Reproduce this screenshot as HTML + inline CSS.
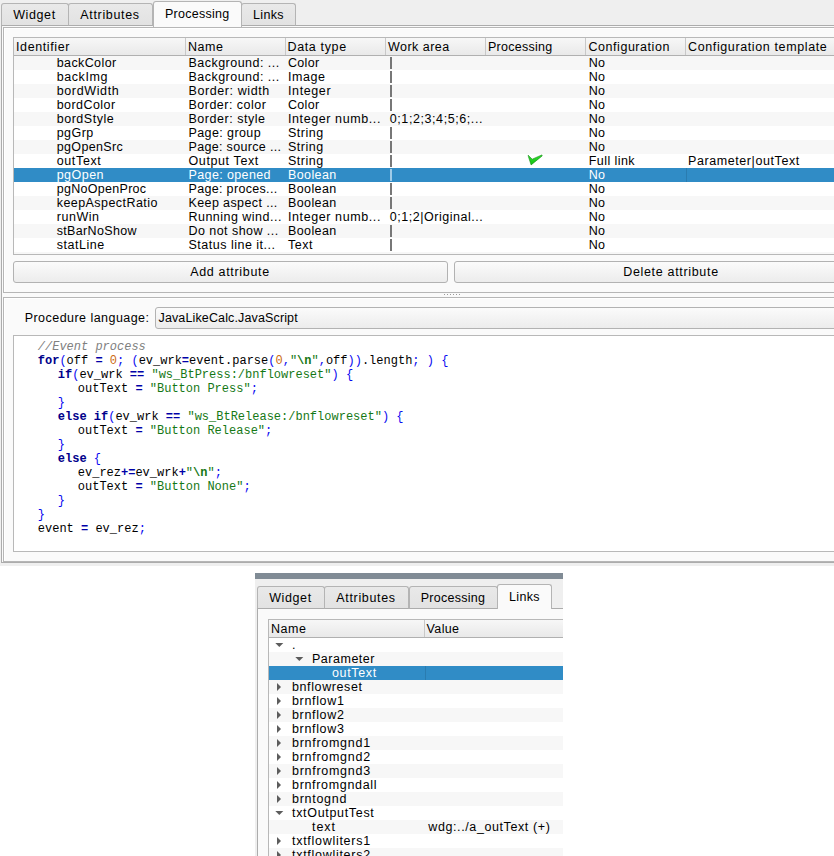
<!DOCTYPE html><html><head><meta charset="utf-8"><style>
*{margin:0;padding:0;box-sizing:border-box}
html,body{width:834px;height:856px;overflow:hidden;background:#ffffff}
body{position:relative;font-family:"Liberation Sans",sans-serif;font-size:12.5px}
.a{position:absolute}
.t{position:absolute;white-space:pre;font-size:12.5px;line-height:14px;font-family:"Liberation Sans",sans-serif}
.code{position:absolute;white-space:pre;font-family:"Liberation Mono",monospace;font-size:12px;line-height:14px;color:#000}
.kw{color:#00008b;font-weight:bold}
.op{color:#0000a8;font-weight:bold}
.p{color:#0a0af0}
.n{color:#cc6a10}
.s{color:#157815}
.sb{color:#157815;font-weight:bold}
.cm{color:#808080;font-style:italic}
</style></head><body>
<div style="position:relative;width:834px;height:856px;overflow:hidden">

<div class="a" style="left:0;top:0;width:834px;height:566px;background:#efefef"></div>
<div class="a" style="left:1px;top:25px;width:850px;height:538px;background:#fafafa;border:1px solid #acacac"></div>
<div class="a" style="left:1px;top:3px;width:68px;height:23px;background:linear-gradient(#e9e9e9,#e2e2e2);border:1px solid #b4b4b4;border-bottom:1px solid #acacac;border-radius:3px 3px 0 0"></div>
<div class="a" style="left:68px;top:3px;width:85px;height:23px;background:linear-gradient(#e9e9e9,#e2e2e2);border:1px solid #b4b4b4;border-bottom:1px solid #acacac;border-radius:3px 3px 0 0"></div>
<div class="a" style="left:241px;top:3px;width:55px;height:23px;background:linear-gradient(#e9e9e9,#e2e2e2);border:1px solid #b4b4b4;border-bottom:1px solid #acacac;border-radius:3px 3px 0 0"></div>
<div class="a" style="left:153px;top:1px;width:89px;height:26px;background:#fafafa;border:1px solid #b4b4b4;border-bottom:none;border-radius:3px 3px 0 0"></div>
<div class="t" style="left:13.2px;top:8px;letter-spacing:0.603px;color:#000;">Widget</div>
<div class="t" style="left:80.3px;top:8px;letter-spacing:0.665px;color:#000;">Attributes</div>
<div class="t" style="left:165.0px;top:7px;letter-spacing:0.272px;color:#000;">Processing</div>
<div class="t" style="left:253.1px;top:8px;letter-spacing:0.329px;color:#000;">Links</div>
<div class="a" style="left:3px;top:27px;width:850px;height:266px;border:1px solid #b6b6b6;background:#fafafa;box-shadow:inset 1px 1px 0 #fff"></div>
<div class="a" style="left:3px;top:297px;width:850px;height:265px;border:1px solid #b6b6b6;background:#fafafa;box-shadow:inset 1px 1px 0 #fff"></div>
<div class="a" style="left:13px;top:37px;width:850px;height:218px;border:1px solid #b8b8b8;background:#fff;overflow:hidden">
<div class="a" style="left:0px;top:0px;width:850px;height:17px;background:linear-gradient(#f7f7f7,#e9e9e9)"></div>
<div class="a" style="left:0px;top:17px;width:850px;height:1px;background:#b0b0b0"></div>
<div class="a" style="left:171px;top:0px;width:1px;height:17px;background:#c8c8c8"></div>
<div class="a" style="left:271px;top:0px;width:1px;height:17px;background:#c8c8c8"></div>
<div class="a" style="left:371px;top:0px;width:1px;height:17px;background:#c8c8c8"></div>
<div class="a" style="left:471px;top:0px;width:1px;height:17px;background:#c8c8c8"></div>
<div class="a" style="left:571px;top:0px;width:1px;height:17px;background:#c8c8c8"></div>
<div class="a" style="left:671px;top:0px;width:1px;height:17px;background:#c8c8c8"></div>
<div class="t" style="left:2.0px;top:2px;letter-spacing:0.612px;color:#000;">Identifier</div>
<div class="t" style="left:174.0px;top:2px;letter-spacing:0.515px;color:#000;">Name</div>
<div class="t" style="left:273.5px;top:2px;letter-spacing:0.641px;color:#000;">Data type</div>
<div class="t" style="left:374.0px;top:2px;letter-spacing:0.475px;color:#000;">Work area</div>
<div class="t" style="left:474.0px;top:2px;letter-spacing:0.272px;color:#000;">Processing</div>
<div class="t" style="left:574.5px;top:2px;letter-spacing:0.541px;color:#000;">Configuration</div>
<div class="t" style="left:674.0px;top:2px;letter-spacing:0.618px;color:#000;">Configuration template</div>
<div class="a" style="left:0px;top:18px;width:850px;height:14px;background:#f7f7f7"></div>
<div class="t" style="left:42.7px;top:18px;letter-spacing:0.397px;color:#000;">backColor</div>
<div class="t" style="left:174.5px;top:18px;letter-spacing:0.472px;color:#000;">Background: ...</div>
<div class="t" style="left:274.0px;top:18px;letter-spacing:0.292px;color:#000;">Color</div>
<div class="a" style="left:376px;top:19px;width:2px;height:12px;background:#777777"></div>
<div class="t" style="left:574.8px;top:18px;letter-spacing:0.170px;color:#000;">No</div>
<div class="a" style="left:0px;top:32px;width:850px;height:14px;background:#ffffff"></div>
<div class="t" style="left:42.7px;top:32px;letter-spacing:0.589px;color:#000;">backImg</div>
<div class="t" style="left:174.5px;top:32px;letter-spacing:0.472px;color:#000;">Background: ...</div>
<div class="t" style="left:274.0px;top:32px;letter-spacing:0.568px;color:#000;">Image</div>
<div class="a" style="left:376px;top:33px;width:2px;height:12px;background:#777777"></div>
<div class="t" style="left:574.8px;top:32px;letter-spacing:0.170px;color:#000;">No</div>
<div class="a" style="left:0px;top:46px;width:850px;height:14px;background:#f7f7f7"></div>
<div class="t" style="left:42.7px;top:46px;letter-spacing:0.630px;color:#000;">bordWidth</div>
<div class="t" style="left:174.5px;top:46px;letter-spacing:0.595px;color:#000;">Border: width</div>
<div class="t" style="left:274.0px;top:46px;letter-spacing:0.607px;color:#000;">Integer</div>
<div class="a" style="left:376px;top:47px;width:2px;height:12px;background:#777777"></div>
<div class="t" style="left:574.8px;top:46px;letter-spacing:0.170px;color:#000;">No</div>
<div class="a" style="left:0px;top:60px;width:850px;height:14px;background:#ffffff"></div>
<div class="t" style="left:42.7px;top:60px;letter-spacing:0.439px;color:#000;">bordColor</div>
<div class="t" style="left:174.5px;top:60px;letter-spacing:0.484px;color:#000;">Border: color</div>
<div class="t" style="left:274.0px;top:60px;letter-spacing:0.292px;color:#000;">Color</div>
<div class="a" style="left:376px;top:61px;width:2px;height:12px;background:#777777"></div>
<div class="t" style="left:574.8px;top:60px;letter-spacing:0.170px;color:#000;">No</div>
<div class="a" style="left:0px;top:74px;width:850px;height:14px;background:#f7f7f7"></div>
<div class="t" style="left:42.7px;top:74px;letter-spacing:0.538px;color:#000;">bordStyle</div>
<div class="t" style="left:174.5px;top:74px;letter-spacing:0.531px;color:#000;">Border: style</div>
<div class="t" style="left:274.0px;top:74px;letter-spacing:0.591px;color:#000;">Integer numb...</div>
<div class="t" style="left:375.8px;top:74px;letter-spacing:0.576px;color:#000;">0;1;2;3;4;5;6;...</div>
<div class="t" style="left:574.8px;top:74px;letter-spacing:0.170px;color:#000;">No</div>
<div class="a" style="left:0px;top:88px;width:850px;height:14px;background:#ffffff"></div>
<div class="t" style="left:42.7px;top:88px;letter-spacing:0.469px;color:#000;">pgGrp</div>
<div class="t" style="left:174.5px;top:88px;letter-spacing:0.405px;color:#000;">Page: group</div>
<div class="t" style="left:274.0px;top:88px;letter-spacing:0.526px;color:#000;">String</div>
<div class="a" style="left:376px;top:89px;width:2px;height:12px;background:#777777"></div>
<div class="t" style="left:574.8px;top:88px;letter-spacing:0.170px;color:#000;">No</div>
<div class="a" style="left:0px;top:102px;width:850px;height:14px;background:#f7f7f7"></div>
<div class="t" style="left:42.7px;top:102px;letter-spacing:0.356px;color:#000;">pgOpenSrc</div>
<div class="t" style="left:174.5px;top:102px;letter-spacing:0.329px;color:#000;">Page: source ...</div>
<div class="t" style="left:274.0px;top:102px;letter-spacing:0.526px;color:#000;">String</div>
<div class="a" style="left:376px;top:103px;width:2px;height:12px;background:#777777"></div>
<div class="t" style="left:574.8px;top:102px;letter-spacing:0.170px;color:#000;">No</div>
<div class="a" style="left:0px;top:116px;width:850px;height:14px;background:#ffffff"></div>
<div class="t" style="left:42.7px;top:116px;letter-spacing:0.641px;color:#000;">outText</div>
<div class="t" style="left:174.5px;top:116px;letter-spacing:0.610px;color:#000;">Output Text</div>
<div class="t" style="left:274.0px;top:116px;letter-spacing:0.526px;color:#000;">String</div>
<div class="a" style="left:376px;top:117px;width:2px;height:12px;background:#777777"></div>
<svg class="a" style="left:513px;top:116px" width="17" height="13" viewBox="527 154 17 13"><defs><linearGradient id="cg" x1="0" y1="0" x2="0" y2="1"><stop offset="0" stop-color="#30e030"/><stop offset="1" stop-color="#10c010"/></linearGradient></defs><polygon points="528.2,155.2 532.2,159.2 541.9,154.9 542.2,155.9 531.1,164.9 528.4,156.6" fill="url(#cg)" stroke="#148a14" stroke-width="0.6" stroke-linejoin="round"/></svg>
<div class="t" style="left:574.8px;top:116px;letter-spacing:0.427px;color:#000;">Full link</div>
<div class="t" style="left:674.0px;top:116px;letter-spacing:0.582px;color:#000;">Parameter|outText</div>
<div class="a" style="left:0px;top:130px;width:850px;height:14px;background:#308cc6"></div>
<div class="t" style="left:42.7px;top:130px;letter-spacing:0.467px;color:#fff;">pgOpen</div>
<div class="t" style="left:174.5px;top:130px;letter-spacing:0.379px;color:#fff;">Page: opened</div>
<div class="t" style="left:274.0px;top:130px;letter-spacing:0.388px;color:#fff;">Boolean</div>
<div class="a" style="left:376px;top:131px;width:2px;height:12px;background:#9fcbe8"></div>
<div class="t" style="left:574.8px;top:130px;letter-spacing:0.170px;color:#fff;">No</div>
<div class="a" style="left:672px;top:130px;width:1px;height:14px;background:#2a7cb0"></div>
<div class="a" style="left:0px;top:144px;width:850px;height:14px;background:#ffffff"></div>
<div class="t" style="left:42.7px;top:144px;letter-spacing:0.296px;color:#000;">pgNoOpenProc</div>
<div class="t" style="left:174.5px;top:144px;letter-spacing:0.329px;color:#000;">Page: proces...</div>
<div class="t" style="left:274.0px;top:144px;letter-spacing:0.388px;color:#000;">Boolean</div>
<div class="a" style="left:376px;top:145px;width:2px;height:12px;background:#777777"></div>
<div class="t" style="left:574.8px;top:144px;letter-spacing:0.170px;color:#000;">No</div>
<div class="a" style="left:0px;top:158px;width:850px;height:14px;background:#f7f7f7"></div>
<div class="t" style="left:42.7px;top:158px;letter-spacing:0.444px;color:#000;">keepAspectRatio</div>
<div class="t" style="left:174.5px;top:158px;letter-spacing:0.390px;color:#000;">Keep aspect ...</div>
<div class="t" style="left:274.0px;top:158px;letter-spacing:0.388px;color:#000;">Boolean</div>
<div class="a" style="left:376px;top:159px;width:2px;height:12px;background:#777777"></div>
<div class="t" style="left:574.8px;top:158px;letter-spacing:0.170px;color:#000;">No</div>
<div class="a" style="left:0px;top:172px;width:850px;height:14px;background:#ffffff"></div>
<div class="t" style="left:42.7px;top:172px;letter-spacing:0.559px;color:#000;">runWin</div>
<div class="t" style="left:174.5px;top:172px;letter-spacing:0.478px;color:#000;">Running wind...</div>
<div class="t" style="left:274.0px;top:172px;letter-spacing:0.591px;color:#000;">Integer numb...</div>
<div class="t" style="left:375.8px;top:172px;letter-spacing:0.523px;color:#000;">0;1;2|Original...</div>
<div class="t" style="left:574.8px;top:172px;letter-spacing:0.170px;color:#000;">No</div>
<div class="a" style="left:0px;top:186px;width:850px;height:14px;background:#f7f7f7"></div>
<div class="t" style="left:42.7px;top:186px;letter-spacing:0.341px;color:#000;">stBarNoShow</div>
<div class="t" style="left:174.5px;top:186px;letter-spacing:0.451px;color:#000;">Do not show ...</div>
<div class="t" style="left:274.0px;top:186px;letter-spacing:0.388px;color:#000;">Boolean</div>
<div class="a" style="left:376px;top:187px;width:2px;height:12px;background:#777777"></div>
<div class="t" style="left:574.8px;top:186px;letter-spacing:0.170px;color:#000;">No</div>
<div class="a" style="left:0px;top:200px;width:850px;height:14px;background:#ffffff"></div>
<div class="t" style="left:42.7px;top:200px;letter-spacing:0.530px;color:#000;">statLine</div>
<div class="t" style="left:174.5px;top:200px;letter-spacing:0.500px;color:#000;">Status line it...</div>
<div class="t" style="left:274.0px;top:200px;letter-spacing:0.552px;color:#000;">Text</div>
<div class="a" style="left:376px;top:201px;width:2px;height:12px;background:#777777"></div>
<div class="t" style="left:574.8px;top:200px;letter-spacing:0.170px;color:#000;">No</div>
<div class="a" style="left:0px;top:214px;width:850px;height:14px;background:#f7f7f7"></div>
</div>
<div class="a" style="left:13px;top:261px;width:435px;height:22px;border:1px solid #b2b2b2;border-radius:3px;background:linear-gradient(#fbfbfb,#ececec)"></div>
<div class="a" style="left:454px;top:261px;width:435px;height:22px;border:1px solid #b2b2b2;border-radius:3px;background:linear-gradient(#fbfbfb,#ececec)"></div>
<div class="t" style="left:190.2px;top:265px;letter-spacing:0.671px;color:#000;">Add attribute</div>
<div class="t" style="left:623.2px;top:265px;letter-spacing:0.676px;color:#000;">Delete attribute</div>
<div class="a" style="left:444px;top:294px;width:1px;height:1px;background:#9a9a9a"></div>
<div class="a" style="left:447px;top:294px;width:1px;height:1px;background:#9a9a9a"></div>
<div class="a" style="left:450px;top:294px;width:1px;height:1px;background:#9a9a9a"></div>
<div class="a" style="left:453px;top:294px;width:1px;height:1px;background:#9a9a9a"></div>
<div class="a" style="left:456px;top:294px;width:1px;height:1px;background:#9a9a9a"></div>
<div class="a" style="left:459px;top:294px;width:1px;height:1px;background:#9a9a9a"></div>
<div class="t" style="left:24.7px;top:311px;letter-spacing:0.458px;color:#000;">Procedure language:</div>
<div class="a" style="left:155px;top:307px;width:700px;height:22px;border:1px solid #b2b2b2;border-radius:3px;background:linear-gradient(#fbfbfb,#ececec)"></div>
<div class="t" style="left:158.5px;top:311px;letter-spacing:0.137px;color:#000;">JavaLikeCalc.JavaScript</div>
<div class="a" style="left:13px;top:335px;width:850px;height:217px;border:1px solid #b8b8b8;background:#fff"></div>
<div class="code" style="left:37.8px;top:340px"><span class="cm">//Event process</span></div>
<div class="code" style="left:37.8px;top:354px"><span class="kw">for</span><span class="p">(</span>off <span class="op">=</span> <span class="n">0</span><span class="p">;</span> <span class="p">(</span>ev_wrk<span class="op">=</span>event.parse<span class="p">(</span><span class="n">0</span><span class="p">,</span><span class="s">"</span><span class="sb">\n</span><span class="s">"</span><span class="p">,</span>off<span class="p">))</span>.length<span class="p">;</span> <span class="p">)</span> <span class="p">{</span></div>
<div class="code" style="left:57.8px;top:368px"><span class="kw">if</span><span class="p">(</span>ev_wrk <span class="op">==</span> <span class="s">"ws_BtPress:/bnflowreset"</span><span class="p">)</span> <span class="p">{</span></div>
<div class="code" style="left:77.8px;top:382px">outText <span class="op">=</span> <span class="s">"Button Press"</span><span class="p">;</span></div>
<div class="code" style="left:57.8px;top:396px"><span class="p">}</span></div>
<div class="code" style="left:57.8px;top:410px"><span class="kw">else</span> <span class="kw">if</span><span class="p">(</span>ev_wrk <span class="op">==</span> <span class="s">"ws_BtRelease:/bnflowreset"</span><span class="p">)</span> <span class="p">{</span></div>
<div class="code" style="left:77.8px;top:424px">outText <span class="op">=</span> <span class="s">"Button Release"</span><span class="p">;</span></div>
<div class="code" style="left:57.8px;top:438px"><span class="p">}</span></div>
<div class="code" style="left:57.8px;top:452px"><span class="kw">else</span> <span class="p">{</span></div>
<div class="code" style="left:77.8px;top:466px">ev_rez<span class="op">+=</span>ev_wrk<span class="op">+</span><span class="s">"</span><span class="sb">\n</span><span class="s">"</span><span class="p">;</span></div>
<div class="code" style="left:77.8px;top:480px">outText <span class="op">=</span> <span class="s">"Button None"</span><span class="p">;</span></div>
<div class="code" style="left:57.8px;top:494px"><span class="p">}</span></div>
<div class="code" style="left:37.8px;top:508px"><span class="p">}</span></div>
<div class="code" style="left:37.8px;top:522px">event <span class="op">=</span> ev_rez<span class="p">;</span></div>
<div class="a" style="left:255px;top:573px;width:308px;height:283px;background:#efefef;overflow:hidden">
<div class="a" style="left:0px;top:0px;width:308px;height:6px;background:#808b95"></div>
<div class="a" style="left:2px;top:35px;width:400px;height:300px;background:#fafafa;border:1px solid #acacac"></div>
<div class="a" style="left:2px;top:13px;width:68px;height:23px;background:linear-gradient(#e9e9e9,#e2e2e2);border:1px solid #b4b4b4;border-bottom:1px solid #acacac;border-radius:3px 3px 0 0"></div>
<div class="a" style="left:69px;top:13px;width:85px;height:23px;background:linear-gradient(#e9e9e9,#e2e2e2);border:1px solid #b4b4b4;border-bottom:1px solid #acacac;border-radius:3px 3px 0 0"></div>
<div class="a" style="left:154px;top:13px;width:89px;height:23px;background:linear-gradient(#e9e9e9,#e2e2e2);border:1px solid #b4b4b4;border-bottom:1px solid #acacac;border-radius:3px 3px 0 0"></div>
<div class="a" style="left:242px;top:11px;width:55px;height:25px;background:#fafafa;border:1px solid #b4b4b4;border-bottom:none;border-radius:3px 3px 0 0"></div>
<div class="t" style="left:14.2px;top:18px;letter-spacing:0.603px;color:#000">Widget</div>
<div class="t" style="left:81.3px;top:18px;letter-spacing:0.665px;color:#000">Attributes</div>
<div class="t" style="left:165.7px;top:18px;letter-spacing:0.272px;color:#000">Processing</div>
<div class="t" style="left:254.1px;top:17px;letter-spacing:0.329px;color:#000">Links</div>
<div class="a" style="left:13px;top:46px;width:400px;height:300px;background:#fff;border:1px solid #b8b8b8"></div>
<div class="a" style="left:14px;top:47px;width:400px;height:17px;background:linear-gradient(#f7f7f7,#e9e9e9)"></div>
<div class="a" style="left:14px;top:64px;width:400px;height:1px;background:#b0b0b0"></div>
<div class="a" style="left:169px;top:47px;width:1px;height:17px;background:#c8c8c8"></div>
<div class="t" style="left:16.0px;top:49px;letter-spacing:0.515px;color:#000">Name</div>
<div class="t" style="left:171.5px;top:49px;letter-spacing:0.383px;color:#000">Value</div>
<div class="a" style="left:14px;top:65px;width:400px;height:14px;background:#ffffff"></div>
<svg class="a" style="left:20px;top:69px" width="9" height="6" viewBox="0 0 9 6"><polygon points="0.3,1 8.3,1 4.3,5" fill="#5c5c5c"/></svg>
<div class="t" style="left:37.0px;top:65px;letter-spacing:0.000px;color:#000">.</div>
<div class="a" style="left:14px;top:79px;width:400px;height:14px;background:#f7f7f7"></div>
<svg class="a" style="left:40px;top:83px" width="9" height="6" viewBox="0 0 9 6"><polygon points="0.3,1 8.3,1 4.3,5" fill="#5c5c5c"/></svg>
<div class="t" style="left:57.0px;top:79px;letter-spacing:0.513px;color:#000">Parameter</div>
<div class="a" style="left:14px;top:93px;width:400px;height:14px;background:#308cc6"></div>
<div class="t" style="left:77.0px;top:93px;letter-spacing:0.641px;color:#fff">outText</div>
<div class="a" style="left:170px;top:93px;width:1px;height:14px;background:#2a7cb0"></div>
<div class="a" style="left:14px;top:107px;width:400px;height:14px;background:#f7f7f7"></div>
<svg class="a" style="left:21px;top:109px" width="6" height="10" viewBox="0 0 6 10"><polygon points="1,1 5,5 1,9" fill="#5c5c5c"/></svg>
<div class="t" style="left:37.0px;top:107px;letter-spacing:0.607px;color:#000">bnflowreset</div>
<div class="a" style="left:14px;top:121px;width:400px;height:14px;background:#ffffff"></div>
<svg class="a" style="left:21px;top:123px" width="6" height="10" viewBox="0 0 6 10"><polygon points="1,1 5,5 1,9" fill="#5c5c5c"/></svg>
<div class="t" style="left:37.0px;top:121px;letter-spacing:0.657px;color:#000">brnflow1</div>
<div class="a" style="left:14px;top:135px;width:400px;height:14px;background:#f7f7f7"></div>
<svg class="a" style="left:21px;top:137px" width="6" height="10" viewBox="0 0 6 10"><polygon points="1,1 5,5 1,9" fill="#5c5c5c"/></svg>
<div class="t" style="left:37.0px;top:135px;letter-spacing:0.657px;color:#000">brnflow2</div>
<div class="a" style="left:14px;top:149px;width:400px;height:14px;background:#ffffff"></div>
<svg class="a" style="left:21px;top:151px" width="6" height="10" viewBox="0 0 6 10"><polygon points="1,1 5,5 1,9" fill="#5c5c5c"/></svg>
<div class="t" style="left:37.0px;top:149px;letter-spacing:0.657px;color:#000">brnflow3</div>
<div class="a" style="left:14px;top:163px;width:400px;height:14px;background:#f7f7f7"></div>
<svg class="a" style="left:21px;top:165px" width="6" height="10" viewBox="0 0 6 10"><polygon points="1,1 5,5 1,9" fill="#5c5c5c"/></svg>
<div class="t" style="left:37.0px;top:163px;letter-spacing:0.722px;color:#000">brnfromgnd1</div>
<div class="a" style="left:14px;top:177px;width:400px;height:14px;background:#ffffff"></div>
<svg class="a" style="left:21px;top:179px" width="6" height="10" viewBox="0 0 6 10"><polygon points="1,1 5,5 1,9" fill="#5c5c5c"/></svg>
<div class="t" style="left:37.0px;top:177px;letter-spacing:0.722px;color:#000">brnfromgnd2</div>
<div class="a" style="left:14px;top:191px;width:400px;height:14px;background:#f7f7f7"></div>
<svg class="a" style="left:21px;top:193px" width="6" height="10" viewBox="0 0 6 10"><polygon points="1,1 5,5 1,9" fill="#5c5c5c"/></svg>
<div class="t" style="left:37.0px;top:191px;letter-spacing:0.722px;color:#000">brnfromgnd3</div>
<div class="a" style="left:14px;top:205px;width:400px;height:14px;background:#ffffff"></div>
<svg class="a" style="left:21px;top:207px" width="6" height="10" viewBox="0 0 6 10"><polygon points="1,1 5,5 1,9" fill="#5c5c5c"/></svg>
<div class="t" style="left:37.0px;top:205px;letter-spacing:0.675px;color:#000">brnfromgndall</div>
<div class="a" style="left:14px;top:219px;width:400px;height:14px;background:#f7f7f7"></div>
<svg class="a" style="left:21px;top:221px" width="6" height="10" viewBox="0 0 6 10"><polygon points="1,1 5,5 1,9" fill="#5c5c5c"/></svg>
<div class="t" style="left:37.0px;top:219px;letter-spacing:0.712px;color:#000">brntognd</div>
<div class="a" style="left:14px;top:233px;width:400px;height:14px;background:#ffffff"></div>
<svg class="a" style="left:20px;top:237px" width="9" height="6" viewBox="0 0 9 6"><polygon points="0.3,1 8.3,1 4.3,5" fill="#5c5c5c"/></svg>
<div class="t" style="left:37.0px;top:233px;letter-spacing:0.680px;color:#000">txtOutputTest</div>
<div class="a" style="left:14px;top:247px;width:400px;height:14px;background:#f7f7f7"></div>
<div class="t" style="left:57.0px;top:247px;letter-spacing:0.937px;color:#000">text</div>
<div class="t" style="left:173.3px;top:247px;letter-spacing:0.601px;color:#000">wdg:../a_outText (+)</div>
<div class="a" style="left:14px;top:261px;width:400px;height:14px;background:#ffffff"></div>
<svg class="a" style="left:21px;top:263px" width="6" height="10" viewBox="0 0 6 10"><polygon points="1,1 5,5 1,9" fill="#5c5c5c"/></svg>
<div class="t" style="left:37.0px;top:261px;letter-spacing:0.717px;color:#000">txtflowliters1</div>
<div class="a" style="left:14px;top:275px;width:400px;height:14px;background:#f7f7f7"></div>
<svg class="a" style="left:21px;top:277px" width="6" height="10" viewBox="0 0 6 10"><polygon points="1,1 5,5 1,9" fill="#5c5c5c"/></svg>
<div class="t" style="left:37.0px;top:275px;letter-spacing:0.717px;color:#000">txtflowliters2</div>
</div>
</div></body></html>
